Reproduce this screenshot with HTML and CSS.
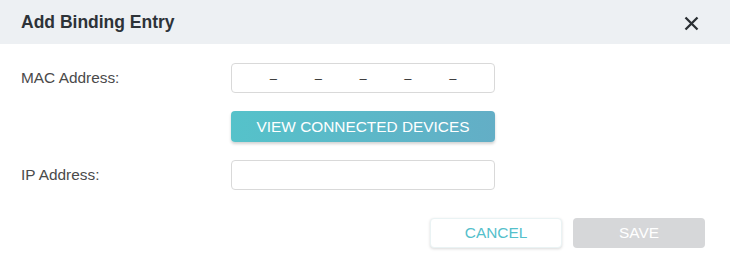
FILE: index.html
```html
<!DOCTYPE html>
<html>
<head>
<meta charset="utf-8">
<link rel="stylesheet" href="styles.css">
</head>
<body>
<div class="dialog">
  <div class="header">
    <h1 class="title">Add Binding Entry</h1>
    <button class="close" aria-label="Close">
      <svg width="15" height="15" viewBox="0 0 15 15"><path d="M1.5 1.5 L13.5 13.5 M13.5 1.5 L1.5 13.5" stroke="#2b2f33" stroke-width="2.3" fill="none"/></svg>
    </button>
  </div>
  <div class="body">
    <div class="row">
      <label class="label">MAC Address:</label>
      <div class="field mac">
        <input class="seg" type="text"><span class="sep">–</span>
        <input class="seg" type="text"><span class="sep">–</span>
        <input class="seg" type="text"><span class="sep">–</span>
        <input class="seg" type="text"><span class="sep">–</span>
        <input class="seg" type="text"><span class="sep">–</span>
        <input class="seg" type="text">
      </div>
    </div>
    <div class="row btn-row">
      <span class="label"></span>
      <button class="view">VIEW CONNECTED DEVICES</button>
    </div>
    <div class="row ip-row">
      <label class="label">IP Address:</label>
      <div class="field"><input class="ip" type="text"></div>
    </div>
  </div>
  <div class="footer">
    <button class="cancel">CANCEL</button>
    <button class="save">SAVE</button>
  </div>
</div>
</body>
</html>
```
FILE: styles.css
```css
* { box-sizing: border-box; }
html, body { margin: 0; padding: 0; background: #fff; }
body { font-family: "Liberation Sans", Arial, sans-serif; width: 730px; height: 268px; overflow: hidden; }
.dialog { width: 730px; }
.header {
  height: 44px;
  background: #edf0f3;
  display: flex;
  align-items: center;
  justify-content: space-between;
  padding: 0 31px 0 21px;
}
.title { margin: 0; font-size: 17.5px; font-weight: bold; color: #2d3338; }
.close { border: 0; background: none; padding: 0; width: 15px; height: 15px; display: flex; margin-top: 2px; }
.body { padding: 19px 0 0 21px; }
.row { display: flex; align-items: center; }
.label { width: 210px; font-size: 15.4px; color: #4a4a4a; }
.field {
  width: 264px; height: 30px;
  border: 1px solid #d9d9d9; border-radius: 4px;
  display: flex; align-items: center;
}
.seg { flex: 1; width: 0; height: 100%; border: 0; background: transparent; outline: none; }
.sep { width: 7px; font-size: 13px; color: #333; text-align: center; line-height: 1; }
.btn-row { margin-top: 18px; }
.view {
  width: 264px; height: 31px;
  border: 0; border-radius: 4px;
  background: linear-gradient(90deg, #55c2ca, #63aec6);
  color: #fff; font-family: inherit; font-size: 15.4px;
  box-shadow: 0 2px 3px rgba(0,0,0,0.18);
  padding: 0;
}
.ip-row { margin-top: 18px; }
.ip { width: 100%; height: 100%; border: 0; background: transparent; outline: none; }
.footer { display: flex; justify-content: flex-end; gap: 11px; padding: 28px 25px 0 0; }
.cancel, .save {
  width: 132px; height: 30px; border-radius: 4px;
  font-family: inherit; font-size: 15.4px; padding: 0;
}
.cancel {
  background: #fff; color: #55c0cb; border: 1px solid #eaf3f4;
  box-shadow: 0 1px 3px rgba(0,0,0,0.15);
}
.save { background: #d6d7d9; color: #fff; border: 0; }
```
